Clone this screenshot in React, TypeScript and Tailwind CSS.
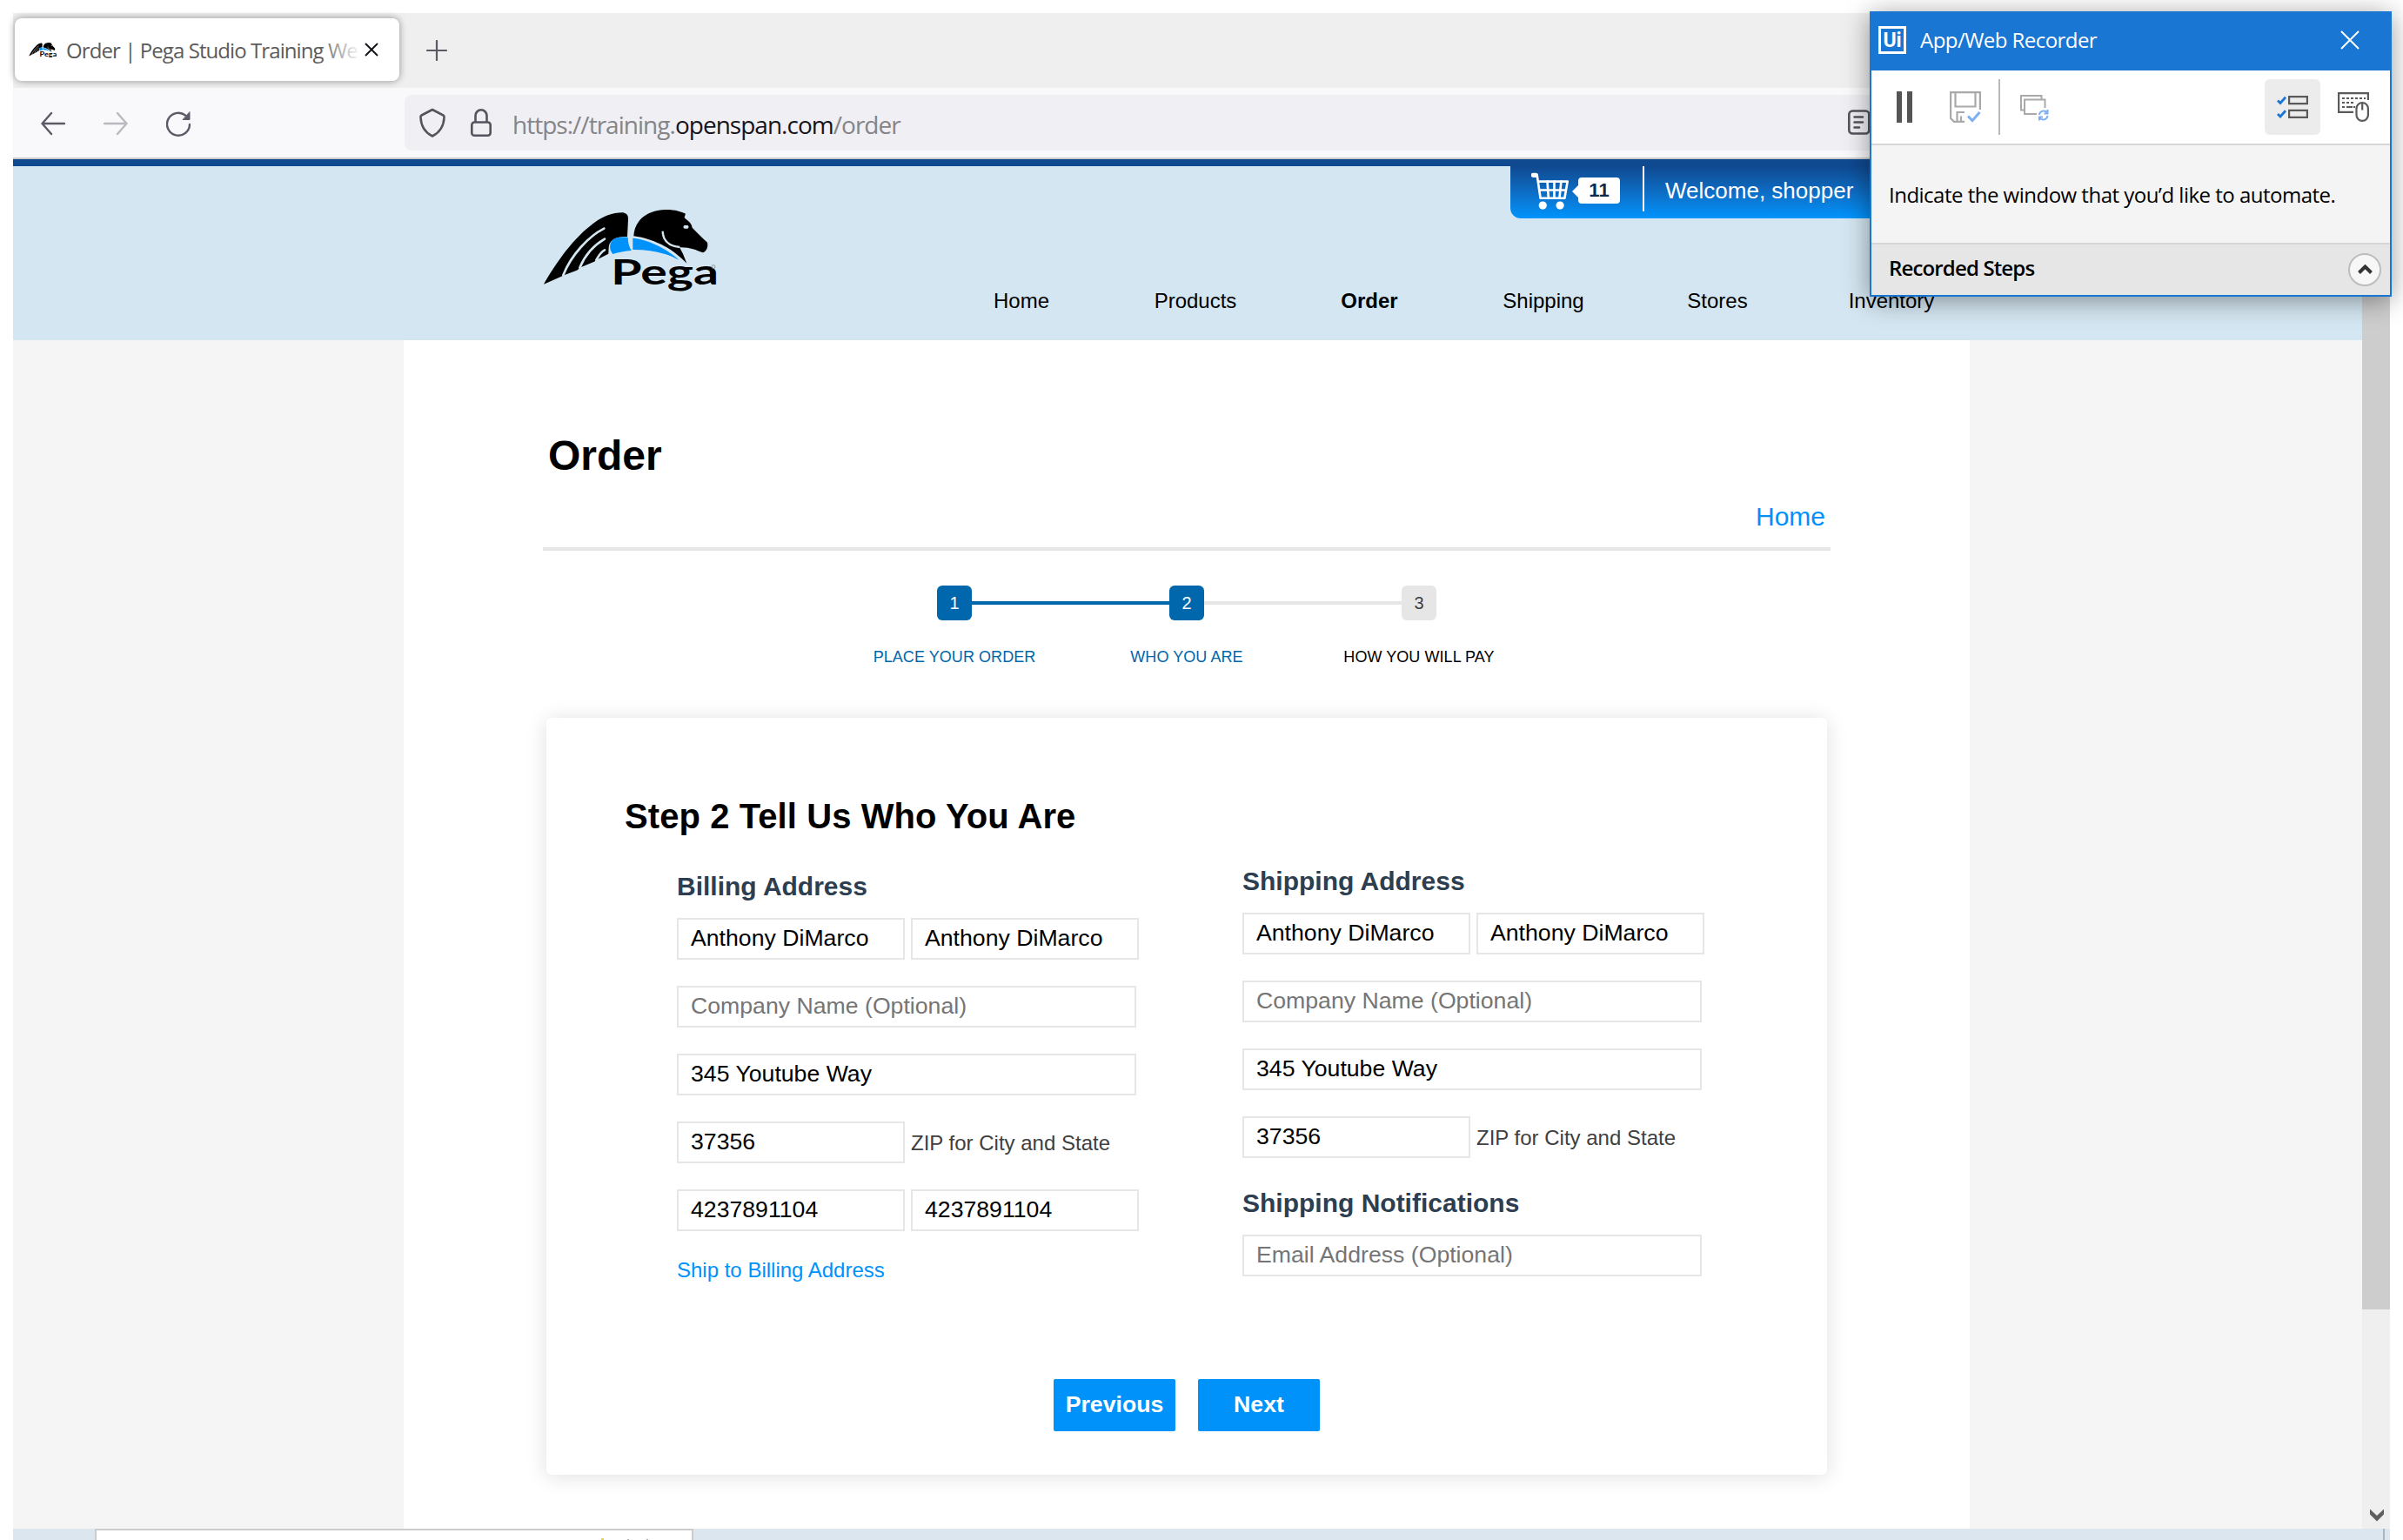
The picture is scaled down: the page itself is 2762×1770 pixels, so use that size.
import React from "react";

const ARIAL = "font-['Liberation_Sans',Arial,sans-serif]";
const SEGOE = "font-['Open_Sans','Noto_Sans',sans-serif]";

function PegaLogo({ className, gap }: { className: string; gap: string }) {
  return (
    <svg className={className} viewBox="73 93 600 282" preserveAspectRatio="none">
      <path
        d="M76 350C110 290 170 200 235 150C270 120 310 102 350 103C362 106 368 112 367 127L364 186C330 184 300 195 300 225L299 245L262 264L250 272L205 291L190 302L148 318L130 326Z"
        fill="#000"
      />
      <g fill="none" stroke={gap} strokeWidth="8" strokeLinecap="round">
        <path d="M284 158C230 185 170 250 143 319" />
        <path d="M286 194C250 215 220 245 200 293" />
        <path d="M286 232C275 238 265 252 257 267" />
      </g>
      <path d="M314 246C300 230 300 202 322 192C335 187 350 187 366 188C366 205 370 220 378 234C355 236 335 240 314 246Z" fill="#0092fb" />
      <path d="M383 191C440 195 510 235 542 267C500 242 440 230 383 231Z" fill="#0092fb" />
      <path
        d="M386 184C388 140 420 94 500 93C530 93 550 100 565 107L561 119C562 126 585 133 588 155C605 172 625 192 640 206C644 222 636 238 624 241C600 232 580 222 544 223L556 245L569 278C560 268 548 258 536 248C505 220 440 190 386 184Z"
        fill="#000"
      />
      <path d="M486 167C487 200 505 218 545 222" fill="none" stroke={gap} strokeWidth="7" />
      <rect x="558" y="147" width="17" height="11" rx="4" fill={gap} />
      <text x="308" y="352" fontFamily="Lato" fontWeight="700" fontSize="119" textLength="371" lengthAdjust="spacingAndGlyphs">
        Pega
      </text>
      <circle cx="661" cy="290" r="6" fill="none" stroke="#888" strokeWidth="2.5" />
    </svg>
  );
}

function TabStrip() {
  return (
    <div className={`flex h-[86px] bg-[#efefef] pl-[2px] pt-[6px] ${SEGOE}`}>
      <div className="flex h-[72px] w-[442px] items-center rounded-[8px] bg-white pl-4 shadow-[0_0_8px_rgba(0,0,0,0.4)]">
        <PegaLogo className="h-[17px] w-[32px]" gap="#fff" />
        <div className="relative ml-[11px] mt-[2px] h-[40px] w-[339px] overflow-hidden whitespace-nowrap text-[24px] leading-[40px] tracking-[-0.92px] text-[#5b5b5b]">
          Order | Pega Studio Training We
          <div className="absolute right-0 top-0 h-full w-[48px] bg-linear-to-r from-white/0 to-white" />
        </div>
        <svg className="ml-[4px] h-[16px] w-[16px]" viewBox="0 0 16 16" stroke="#15141a" strokeWidth="2">
          <path d="M1 1L15 15M15 1L1 15" />
        </svg>
      </div>
      <svg className="ml-[31px] mt-[25px] h-[24px] w-[24px]" viewBox="0 0 24 24" stroke="#5b5b66" strokeWidth="2.2" strokeLinecap="round">
        <path d="M1 12H23M12 1V23" />
      </svg>
    </div>
  );
}

function Toolbar() {
  return (
    <div className={`flex h-[82px] items-start border-b-2 border-[#ccc] bg-[#f9f9fb] pt-[8px] ${SEGOE}`}>
      <div className="flex h-[64px] w-[450px] items-center pl-[32px] pt-[2px]">
        <svg className="h-[28px] w-[28px]" viewBox="0 0 28 28" fill="none" stroke="#5b5b66" strokeWidth="2.4" strokeLinecap="round" strokeLinejoin="round">
          <path d="M27 14H1.500M12 2L1.500 14L12 26" />
        </svg>
        <svg className="ml-[44px] h-[28px] w-[28px]" viewBox="0 0 28 28" fill="none" stroke="#b9b9c0" strokeWidth="2.400" strokeLinecap="round" strokeLinejoin="round">
          <path d="M1 14H26.500M16 2L26.500 14L16 26" />
        </svg>
        <svg className="ml-[44px] h-[30px] w-[28px]" viewBox="0 0 28 30" fill="none" stroke="#5b5b66" strokeWidth="2.4" strokeLinecap="round">
          <path d="M27 16A13 13 0 1 1 22 5.500" />
          <path d="M27 2V10.500H19.500Z" fill="#5b5b66" strokeWidth="1" strokeLinejoin="round" />
        </svg>
      </div>
      <div className="flex h-[64px] w-[2260px] items-center rounded-[8px] bg-[#f0eff4] pl-[17px]">
        <svg className="h-[34px] w-[30px]" viewBox="0 0 30 34" fill="none" stroke="#55545c" strokeWidth="2.6" strokeLinejoin="round">
          <path d="M15 2L27.500 8.500Q28.700 9 28.500 11C28 22 23 28.500 15 32.500C7 28.500 2 22 1.500 11Q1.300 9 2.500 8.500Z" />
        </svg>
        <svg className="ml-[29px] h-[32px] w-[24px]" viewBox="0 0 24 32" fill="none" stroke="#55545c" strokeWidth="2.600">
          <rect x="1.300" y="15.500" width="21.400" height="15.200" rx="3" />
          <path d="M5.500 15.500V8A6.500 6.700 0 0 1 18.500 8V15.500" />
        </svg>
        <div className="ml-[24px] mt-[3px] w-[1535px] whitespace-nowrap text-[28px] leading-[40px] tracking-[-0.98px] text-[#858489]">
          https://training.<span className="text-[#15141a]">openspan.com</span>/order
        </div>
        <svg className="h-[30px] w-[26px]" viewBox="0 0 26 30" fill="none" stroke="#55545c" strokeWidth="2.600" strokeLinecap="round">
          <rect x="1.300" y="1.500" width="23" height="26" rx="4" />
          <path d="M7.500 8.500H17M7.500 14.500H17M7.500 20.500H13" />
        </svg>
      </div>
    </div>
  );
}

const NAV = ["Home", "Products", "Order", "Shipping", "Stores", "Inventory"];

function SiteHeader() {
  return (
    <div className="h-[208px] w-[2700px] bg-[#d4e6f1]">
      <div className="h-[8px] bg-[#0f4990]" />
      <div className="flex">
        <div className="w-[1059px] pl-[609px] pt-[50px]">
          <PegaLogo className="h-[94px] w-[200px]" gap="#d4e6f1" />
        </div>
        <div className="flex-1">
          <div className="ml-[662px] flex h-[60px] items-start rounded-bl-[12px] bg-linear-to-b from-[#0f4990] to-[#0094fd] pl-[24px]">
            <svg className="mt-[7px] h-[43px] w-[43px]" viewBox="180 85 130 130" fill="none" stroke="#fff" strokeWidth="8" strokeLinecap="round" strokeLinejoin="round">
              <path d="M187 95H196" strokeWidth="16" />
              <path d="M200 94L212 175H296L306 117H207" />
              <path d="M210 147H300M236 117L240 175M260 117V175M284 117L278 175" />
              <circle cx="220" cy="200" r="14" fill="#fff" stroke="none" />
              <circle cx="280" cy="200" r="14" fill="#fff" stroke="none" />
            </svg>
            <svg className="ml-[4px] mt-[22px] h-[14px] w-[7px]" viewBox="0 0 7 14">
              <path d="M0 7L7 0V14Z" fill="#fff" />
            </svg>
            <div className="mt-[13px] h-[30px] w-[48px] rounded-[4px] bg-white text-center text-[22px] font-bold leading-[29px] text-[#0e2a50]">11</div>
            <div className="ml-[26px] h-[52px] w-[2px] bg-white" />
            <div className="ml-[24px] mt-[12px] text-[26px] leading-[32px] text-white">Welcome, shopper</div>
          </div>
          <div className="mt-[81px] flex">
            {NAV.map((n) => (
              <div key={n} className={n === "Order" ? "w-[200px] text-center text-[24px] font-bold leading-[28px]" : "w-[200px] text-center text-[24px] leading-[28px]"}>
                {n}
              </div>
            ))}
          </div>
        </div>
      </div>
    </div>
  );
}

function Field({ text, wide, muted }: { text: string; wide?: boolean; muted?: boolean }) {
  return (
    <div
      className={`h-[48px] shrink-0 whitespace-nowrap border-2 border-[#e6e6e6] bg-white pl-[14px] text-[26.67px] leading-[43px] ${wide ? "w-[528px]" : "w-[262px]"} ${muted ? "text-[#757575]" : "text-black"}`}
    >
      {text}
    </div>
  );
}

function Row({ children }: { children: React.ReactNode }) {
  return <div className="mb-[30px] flex gap-[7px]">{children}</div>;
}

function ZipRow() {
  return (
    <Row>
      <Field text="37356" />
      <div className="pt-[10px] text-[24px] leading-[30px] text-[#404040]">ZIP for City and State</div>
    </Row>
  );
}

function NameAndAddress() {
  return (
    <>
      <Row>
        <Field text="Anthony DiMarco" />
        <Field text="Anthony DiMarco" />
      </Row>
      <Row>
        <Field text="Company Name (Optional)" wide muted />
      </Row>
      <Row>
        <Field text="345 Youtube Way" wide />
      </Row>
      <ZipRow />
    </>
  );
}

const STEPS = [
  { n: "1", label: "PLACE YOUR ORDER", box: "bg-[#0067ac] text-white", text: "text-[#0067ac]", left: "bg-transparent", right: "bg-[#0067ac]" },
  { n: "2", label: "WHO YOU ARE", box: "bg-[#0067ac] text-white", text: "text-[#0067ac]", left: "bg-[#0067ac]", right: "bg-[#e6e6e6]" },
  { n: "3", label: "HOW YOU WILL PAY", box: "bg-[#e6e6e6] text-[#404040]", text: "text-black", left: "bg-[#e6e6e6]", right: "bg-transparent" },
];

function OrderPage() {
  return (
    <div className="h-[1366px] w-[1800px] bg-white px-[160px] pt-[103px]">
      <h1 className="pl-[6px] text-[48px] font-bold leading-[60px]">Order</h1>
      <div className="mt-[20px] pr-[6px] text-right text-[30px] leading-[40px] text-[#0092fb]">Home</div>
      <div className="mt-[15px] h-[4px] bg-[#e6e6e6]" />
      <div className="mx-auto mt-[40px] flex w-[801px]">
        {STEPS.map((s) => (
          <div key={s.n} className="w-[267px]">
            <div className="flex items-center">
              <div className={`h-[4px] flex-1 ${s.left}`} />
              <div className={`h-[40px] w-[40px] rounded-[6px] text-center text-[20px] leading-[40px] ${s.box}`}>{s.n}</div>
              <div className={`h-[4px] flex-1 ${s.right}`} />
            </div>
            <div className={`mt-[31px] text-center text-[18px] leading-[22px] tracking-[0.06px] ${s.text}`}>{s.label}</div>
          </div>
        ))}
      </div>
      <div className="ml-[4px] mt-[59px] h-[870px] w-[1472px] rounded-[6px] bg-white pt-[87px] shadow-[0_2px_24px_rgba(0,0,0,0.13)]">
        <h2 className="pl-[90px] text-[40px] font-bold leading-[52px] tracking-[0.08px]">Step 2 Tell Us Who You Are</h2>
        <div className="flex h-[621px]">
          <div className="w-[650px] pl-[150px] pt-[35px]">
            <h3 className="mb-[16px] text-[30px] font-bold leading-[40px] text-[#2c3e50]">Billing Address</h3>
            <NameAndAddress />
            <Row>
              <Field text="4237891104" />
              <Field text="4237891104" />
            </Row>
            <div className="text-[24px] leading-[30px] text-[#0092fb]">Ship to Billing Address</div>
          </div>
          <div className="w-[700px] pl-[150px] pt-[29px]">
            <h3 className="mb-[16px] text-[30px] font-bold leading-[40px] text-[#2c3e50]">Shipping Address</h3>
            <NameAndAddress />
            <h3 className="mb-[16px] mt-[32px] text-[30px] font-bold leading-[40px] text-[#2c3e50]">Shipping Notifications</h3>
            <Field text="Email Address (Optional)" wide muted />
          </div>
        </div>
        <div className="flex gap-[26px] pl-[583px] text-[26.67px] font-bold leading-[59px] text-white">
          <div className="h-[60px] w-[140px] rounded-[2px] bg-[#0092fb] text-center">Previous</div>
          <div className="h-[60px] w-[140px] rounded-[2px] bg-[#0092fb] text-center">Next</div>
        </div>
      </div>
    </div>
  );
}

function Recorder() {
  return (
    <div className={`absolute left-[2149px] top-[13px] flex h-[328px] w-[600px] flex-col border-2 border-[#1976d2] bg-[#f4f4f4] shadow-[0_4px_28px_rgba(0,0,0,0.4)] ${SEGOE}`}>
      <div className="flex h-[66px] items-center bg-[#1976d2] pl-[8px] pr-[35px]">
        <div className="mb-[4px] h-[32px] w-[32px] border-[3px] border-white text-center font-['Roboto'] text-[23px] font-bold leading-[27px] text-white">Ui</div>
        <div className="ml-[16px] flex-1 whitespace-nowrap pb-[5px] text-[24px] leading-[36px] tracking-[-0.55px] text-white">App/Web Recorder</div>
        <svg className="mb-[5px] h-[22px] w-[22px]" viewBox="0 0 22 22" stroke="#fff" strokeWidth="2">
          <path d="M1 1L21 21M21 1L1 21" />
        </svg>
      </div>
      <div className="flex h-[86px] items-start border-b-2 border-[#d6d6d6] bg-white pt-[10px]">
        <svg className="ml-[29px] mt-[14px] h-[36px] w-[18px]" viewBox="0 0 18 36" fill="#555">
          <path d="M0 0H6V36H0ZM12 0H18V36H12Z" />
        </svg>
        <svg className="ml-[43px] mt-[14px] h-[36px] w-[36px]" viewBox="0 0 36 36" fill="none" stroke="#a9a9a9" strokeWidth="2.200">
          <path d="M34.900 21V1.100H1.100V31L5 34.900H17M6.500 1.500V17.500H29.500V1.500M8.500 34V24H17M13 28.500V34" />
          <path d="M21 28.500L26 33.500L34.500 24" stroke="#7db0f2" strokeWidth="3" />
        </svg>
        <div className="ml-[20px] h-[64px] w-[2px] bg-[#b9b9b9]" />
        <svg className="ml-[23px] mt-[18px] h-[30px] w-[33px]" viewBox="0 0 33 30" fill="none" stroke="#a9a9a9" strokeWidth="2">
          <path d="M5 17.500H1V1H24.500V5M28.500 15V5.500H5V22H19" />
          <path d="M22 23A5 5 0 0 1 31 20.500M31.500 17V21.500H27.500M31.500 24A5 5 0 0 1 22.500 26.500M22 29.500V25.500H26" stroke="#7db0f2" />
        </svg>
        <div className="ml-[248px] flex h-[64px] w-[64px] items-center justify-center rounded-[6px] bg-[#ececec]">
          <svg className="h-[26px] w-[36px]" viewBox="0 0 36 26" fill="none" stroke="#5a5a5a" strokeWidth="2.200">
            <path d="M14.100 1.100H34.900V9.100H14.100ZM14.100 16.900H34.900V24.900H14.100Z" />
            <path d="M1 5.500L4 8.500L10 1.800M1 21L4 24L10 17.300" stroke="#1976d2" strokeWidth="2.800" />
          </svg>
        </div>
        <svg className="ml-[20px] mt-[15px] h-[34px] w-[36px]" viewBox="0 0 36 34" fill="none" stroke="#5a5a5a" strokeWidth="2.200">
          <path d="M18 22.900H1.100V1.100H34.900V9" />
          <path d="M5 7H32M5 12H20M5 17H8M18 17H20" strokeDasharray="3 2" />
          <path d="M10 17H17" />
          <rect x="21.500" y="12" width="13.400" height="20.900" rx="6.700" fill="#fff" />
          <path d="M28.200 12V20.500" />
        </svg>
      </div>
      <div className="h-[114px] whitespace-nowrap border-b-2 border-[#d6d6d6] pl-[20px] pt-[39px] text-[24px] leading-[36px] tracking-[-0.51px] text-black">
        Indicate the window that you’d like to automate.
      </div>
      <div className="flex flex-1 items-center justify-between bg-[#e6e6e6] pl-[20px] pr-[10px]">
        <div className="whitespace-nowrap pb-[4px] text-[24px] font-semibold leading-[36px] tracking-[-0.85px] text-black">Recorded Steps</div>
        <div className="flex h-[38px] w-[38px] items-center justify-center rounded-full border-2 border-[#bdbdbd] bg-[#f7f7f7]">
          <svg className="mb-[2px] h-[11px] w-[17px]" viewBox="0 0 17 11" fill="none" stroke="#333" strokeWidth="4">
            <path d="M1.500 9.500L8.500 2.500L15.500 9.500" />
          </svg>
        </div>
      </div>
    </div>
  );
}

export default function App() {
  return (
    <div className={`relative h-[1770px] w-[2762px] overflow-hidden bg-white pl-[15px] pt-[15px] text-black ${ARIAL}`}>
      <div className="w-[2732px]">
        <TabStrip />
        <Toolbar />
        <div className="flex h-[1574px]">
          <div className="w-[2700px] bg-[#f5f5f5]">
            <SiteHeader />
            <div className="pl-[449px]">
              <OrderPage />
            </div>
          </div>
          <div className="flex w-[32px] flex-col justify-between bg-[#efefef]">
            <div className="h-[1322px] bg-[#cdcdcd]" />
            <svg className="mb-[8px] ml-[9px] h-[15px] w-[16px]" viewBox="0 0 16 15" fill="#5f5f5f">
              <path d="M0 0.500L8 8L16 0.500V6.500L8 14.500L0 6.500Z" />
            </svg>
          </div>
        </div>
        <div className="flex h-[13px] bg-[#dbe6ee] pl-[94px]">
          <div className="flex w-[688px] items-end gap-[20px] border-x-2 border-t-2 border-[#ccc] bg-white pl-[580px]">
            <div className="h-[2px] w-[3px] bg-[#e8d44a]" />
            <div className="ml-[7px] h-px w-[2px] bg-[#aaa]" />
            <div className="h-px w-[2px] bg-[#aaa]" />
          </div>
          <div className="ml-[1942px] w-[2px] bg-[#aeb6be]" />
        </div>
      </div>
      <Recorder />
    </div>
  );
}
